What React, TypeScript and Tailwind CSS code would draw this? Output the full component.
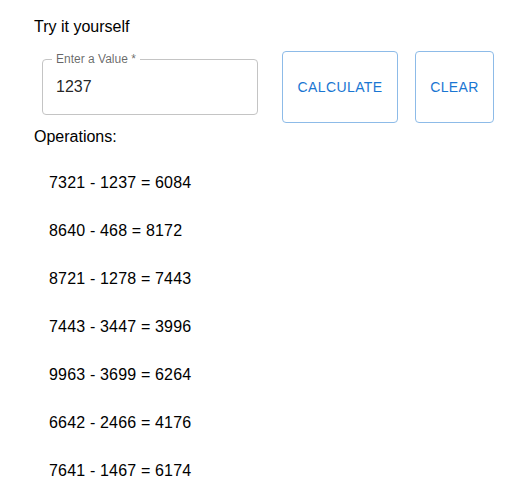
import { useState } from "react";

const ops = [
  "7321 - 1237 = 6084",
  "8640 - 468 = 8172",
  "8721 - 1278 = 7443",
  "7443 - 3447 = 3996",
  "9963 - 3699 = 6264",
  "6642 - 2466 = 4176",
  "7641 - 1467 = 6174",
];

function App() {
  const [value, setValue] = useState("1237");

  return (
    <div className="min-h-screen bg-white pl-[34px] pt-[15px] text-[16px] leading-[24px] text-black/[0.87] font-['Liberation_Sans',Arial,sans-serif]">
      <p className="text-black">Try it yourself</p>

      {/* input row */}
      <div className="mt-[12px] flex items-center">
        <div className="relative ml-[8px] h-[56px] w-[216px] rounded-[4px] border border-[#c4c4c4]">
          <label className="absolute -top-[8px] left-[9px] bg-white px-[4px] text-[12px] leading-[14px] text-black/60">
            Enter a Value *
          </label>
          <input
            className="h-full w-full bg-transparent px-[13px] text-[16px] text-black/[0.87] outline-none"
            value={value}
            onChange={(e) => setValue(e.target.value)}
          />
        </div>
        <button className="ml-[24px] h-[72px] w-[116px] rounded-[4px] border border-[#8dbbe8] text-[14px] tracking-[0.4px] text-[#1976d2]">
          CALCULATE
        </button>
        <button
          className="ml-[17px] h-[72px] w-[79px] rounded-[4px] border border-[#8dbbe8] text-[14px] tracking-[0.4px] text-[#1976d2]"
          onClick={() => setValue("")}
        >
          CLEAR
        </button>
      </div>

      <p className="mt-[2px] text-black">Operations:</p>

      {/* operations list */}
      <div className="mt-[22px] flex flex-col gap-[24px] pl-[15px] tracking-[0.17px] text-black">
        {ops.map((op) => (
          <p key={op}>{op}</p>
        ))}
      </div>
    </div>
  );
}

export default App;
